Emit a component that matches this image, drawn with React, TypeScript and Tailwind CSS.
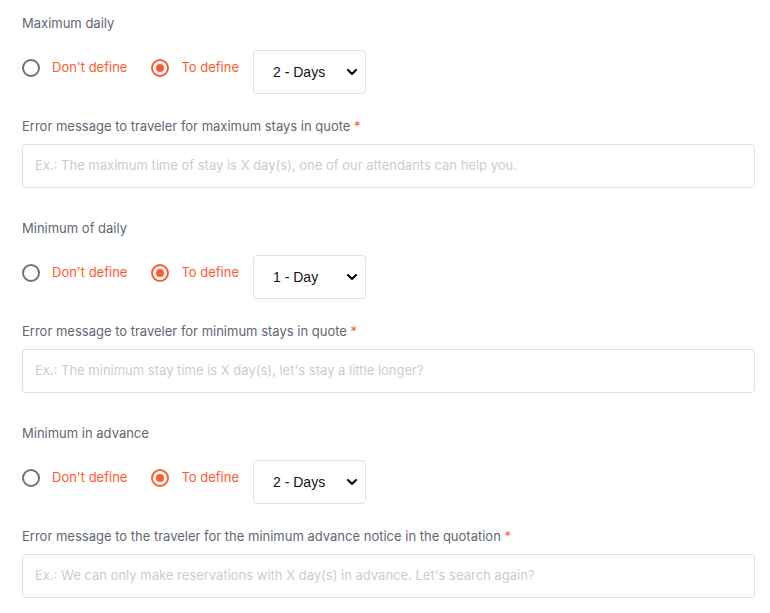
import { ChevronDown } from "lucide-react";

const SECTIONS = [
  {
    title: "Maximum daily",
    value: "2 - Days",
    message: "Error message to traveler for maximum stays in quote",
    placeholder: "Ex.: The maximum time of stay is X day(s), one of our attendants can help you.",
  },
  {
    title: "Minimum of daily",
    value: "1 - Day",
    message: "Error message to traveler for minimum stays in quote",
    placeholder: "Ex.: The minimum stay time is X day(s), let's stay a little longer?",
  },
  {
    title: "Minimum in advance",
    value: "2 - Days",
    message: "Error message to the traveler for the minimum advance notice in the quotation",
    placeholder: "Ex.: We can only make reservations with X day(s) in advance. Let's search again?",
  },
];

function Radio({ checked, label }: { checked?: boolean; label: string }) {
  return (
    <label className="flex h-[35px] items-center gap-3 text-[13px] text-[#ff5a2e]">
      <span
        className={
          checked
            ? "flex h-[18px] w-[18px] items-center justify-center rounded-full border-2 border-[#ff5a2e]"
            : "h-[18px] w-[18px] rounded-full border-2 border-[#6b7280]"
        }
      >
        {checked && <span className="h-2 w-2 rounded-full bg-[#ff5a2e]" />}
      </span>
      {label}
    </label>
  );
}

export default function App() {
  return (
    <main
      className="bg-white pl-[22px] pr-[15px] pt-[13px]"
      style={{ fontFamily: "Inter, 'Noto Sans', sans-serif" }}
    >
      {SECTIONS.map((s) => (
        <section key={s.title} className="mb-[30px] last:mb-0">
          <p className="text-[13px] leading-5 text-[#5f6774]">{s.title}</p>
          <div className="mt-[17px] flex items-start">
            <Radio label="Don't define" />
            <div className="ml-6">
              <Radio checked label="To define" />
            </div>
            <div
              className="relative ml-[14px] flex h-11 w-[113px] items-center rounded border border-[#dde1e6] pl-[19px] text-[14px] text-[#111]"
              style={{ fontFamily: "'Liberation Sans', Arial, sans-serif" }}
            >
              {s.value}
              <ChevronDown className="absolute right-[5px] h-4 w-4 text-black" strokeWidth={3} />
            </div>
          </div>
          <p className="mt-[22px] text-[13px] leading-5 text-[#5f6774]">
            {s.message} <span className="text-[#ff5a2e]">*</span>
          </p>
          <div className="mt-2 flex h-11 items-center rounded border border-[#dde1e6] px-3 text-[13px] text-[#c9cdd3]">
            {s.placeholder}
          </div>
        </section>
      ))}
    </main>
  );
}
